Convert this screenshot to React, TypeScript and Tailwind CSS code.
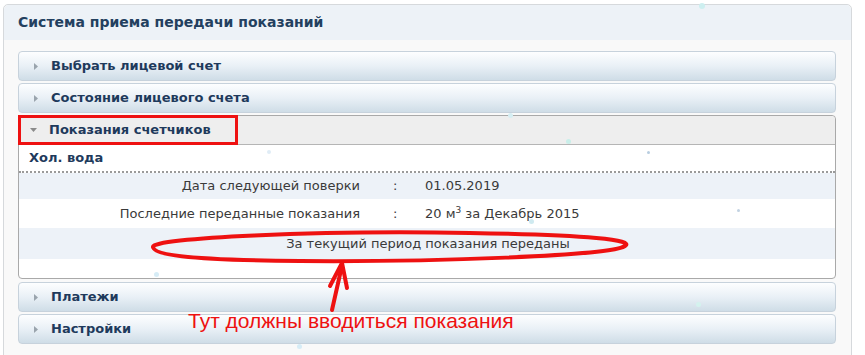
const sections = ["Выбрать лицевой счет", "Состояние лицевого счета"];

const Arrow = ({ open }: { open?: boolean }) =>
  open ? (
    <svg width="9" height="6" viewBox="0 0 9 6" className="mr-[11px]">
      <path d="M1 1h7L4.5 5z" fill="#8a8a8a" />
    </svg>
  ) : (
    <svg width="6" height="9" viewBox="0 0 6 9" className="mr-[12px] ml-[3px]">
      <path d="M1 1v7l4-3.5z" fill="#9aa4ad" />
    </svg>
  );

const ClosedItem = ({ title }: { title: string }) => (
  <div className="h-[30px] mb-[2px] flex items-center pl-[11px] rounded-[4px] border border-[#c7d2dc] bg-gradient-to-b from-[#fdfeff] via-[#e9f0f6] to-[#cfdde7] text-[13px] font-bold text-[#1e3a5c]">
    <Arrow />
    {title}
  </div>
);

// snowflake dots scattered over the page
const flakes = [
  { x: 699, y: 3, s: 6, c: "#cdeff0" },
  { x: 508, y: 113, s: 5, c: "#d5eef3" },
  { x: 566, y: 139, s: 5, c: "#c9eee9" },
  { x: 647, y: 151, s: 3, c: "#b8cde0" },
  { x: 267, y: 150, s: 4, c: "#e0ecf6" },
  { x: 737, y: 209, s: 3, c: "#c2d2e2" },
  { x: 529, y: 219, s: 5, c: "#cfeaf0" },
  { x: 154, y: 272, s: 5, c: "#d6ecf6" },
  { x: 297, y: 344, s: 5, c: "#d6ecf6" },
  { x: 696, y: 302, s: 5, c: "#d4f2ee" },
];

export default function App() {
  return (
    <div className="relative w-[865px] h-[355px] overflow-hidden bg-white font-['DejaVu_Sans',Verdana,sans-serif]">
      <div className="ml-[3px] mt-[4px] w-[849px] h-[360px] border border-[#d6d9dc] rounded-t-[5px] bg-[#f9f9f9]">
        <div className="h-[35px] bg-[#edf2f7] rounded-t-[5px] flex items-center pl-[14px] text-[14px] font-bold text-[#23405f]">
          Система приема передачи показаний
        </div>

        <div className="pl-[14px] pr-[15px] pt-[11px]">
          {sections.map((s) => (
            <ClosedItem key={s} title={s} />
          ))}

          {/* open section */}
          <div className="relative mb-[3px] rounded-[4px] border border-[#a9a9a9] bg-white">
            <div className="h-[29px] flex items-center pl-[10px] bg-[#eeeeee] border-b border-[#b5b5b5] rounded-t-[4px] text-[13px] font-bold text-[#1e3a5c]">
              <Arrow open />
              Показания счетчиков
            </div>
            <div className="absolute left-[-1px] top-[-1px] w-[220px] h-[30px] border-[3px] border-[#ee1111]" />

            <div className="h-[28px] flex items-center pl-[10px] text-[13px] font-bold text-[#1e3a5c] border-b-2 border-dotted border-[#9a9a9a]">
              Хол. вода
            </div>

            <div className="text-[13px] text-[#3a3a3a]">
              <div className="h-[26px] flex items-center bg-[#edf2f8]">
                <div className="w-[341px] text-right">Дата следующей поверки</div>
                <div className="w-[65px] pl-[33px]">:</div>
                <div>01.05.2019</div>
              </div>
              <div className="h-[29px] flex items-center bg-white">
                <div className="w-[341px] text-right">Последние переданные показания</div>
                <div className="w-[65px] pl-[33px]">:</div>
                <div>
                  20 м<sup className="text-[9px]">3</sup> за Декабрь 2015
                </div>
              </div>
              <div className="h-[31px] flex items-center justify-center bg-[#edf2f8] pl-[2px]">
                За текущий период показания переданы
              </div>
              <div className="h-[19px]" />
            </div>
          </div>

          <ClosedItem title="Платежи" />
          <ClosedItem title="Настройки" />
        </div>
      </div>

      {flakes.map((f, i) => (
        <div
          key={i}
          className="absolute rounded-full"
          style={{ left: f.x, top: f.y, width: f.s, height: f.s, background: f.c }}
        />
      ))}

      {/* red annotation */}
      <svg className="absolute left-0 top-0" width="865" height="355" viewBox="0 0 865 355">
        <path
          d="M153 247 C 150 238, 320 230, 470 233 C 590 235, 635 240, 625 246 C 610 256, 430 262, 300 261 C 180 260, 154 254, 153 247 Z"
          fill="none"
          stroke="#ee1111"
          strokeWidth="4"
        />
        <path d="M332 310 L341 270" stroke="#ee1111" strokeWidth="4" strokeLinecap="round" />
        <path d="M330 286 L342 263 L347 288" fill="none" stroke="#ee1111" strokeWidth="4" strokeLinejoin="round" strokeLinecap="round" />
      </svg>
      <div className="absolute left-[188px] top-[308px] text-[21px] leading-[26px] text-[#ee1111] font-['Liberation_Sans',Arial,sans-serif]">
        Тут должны вводиться показания
      </div>
    </div>
  );
}
